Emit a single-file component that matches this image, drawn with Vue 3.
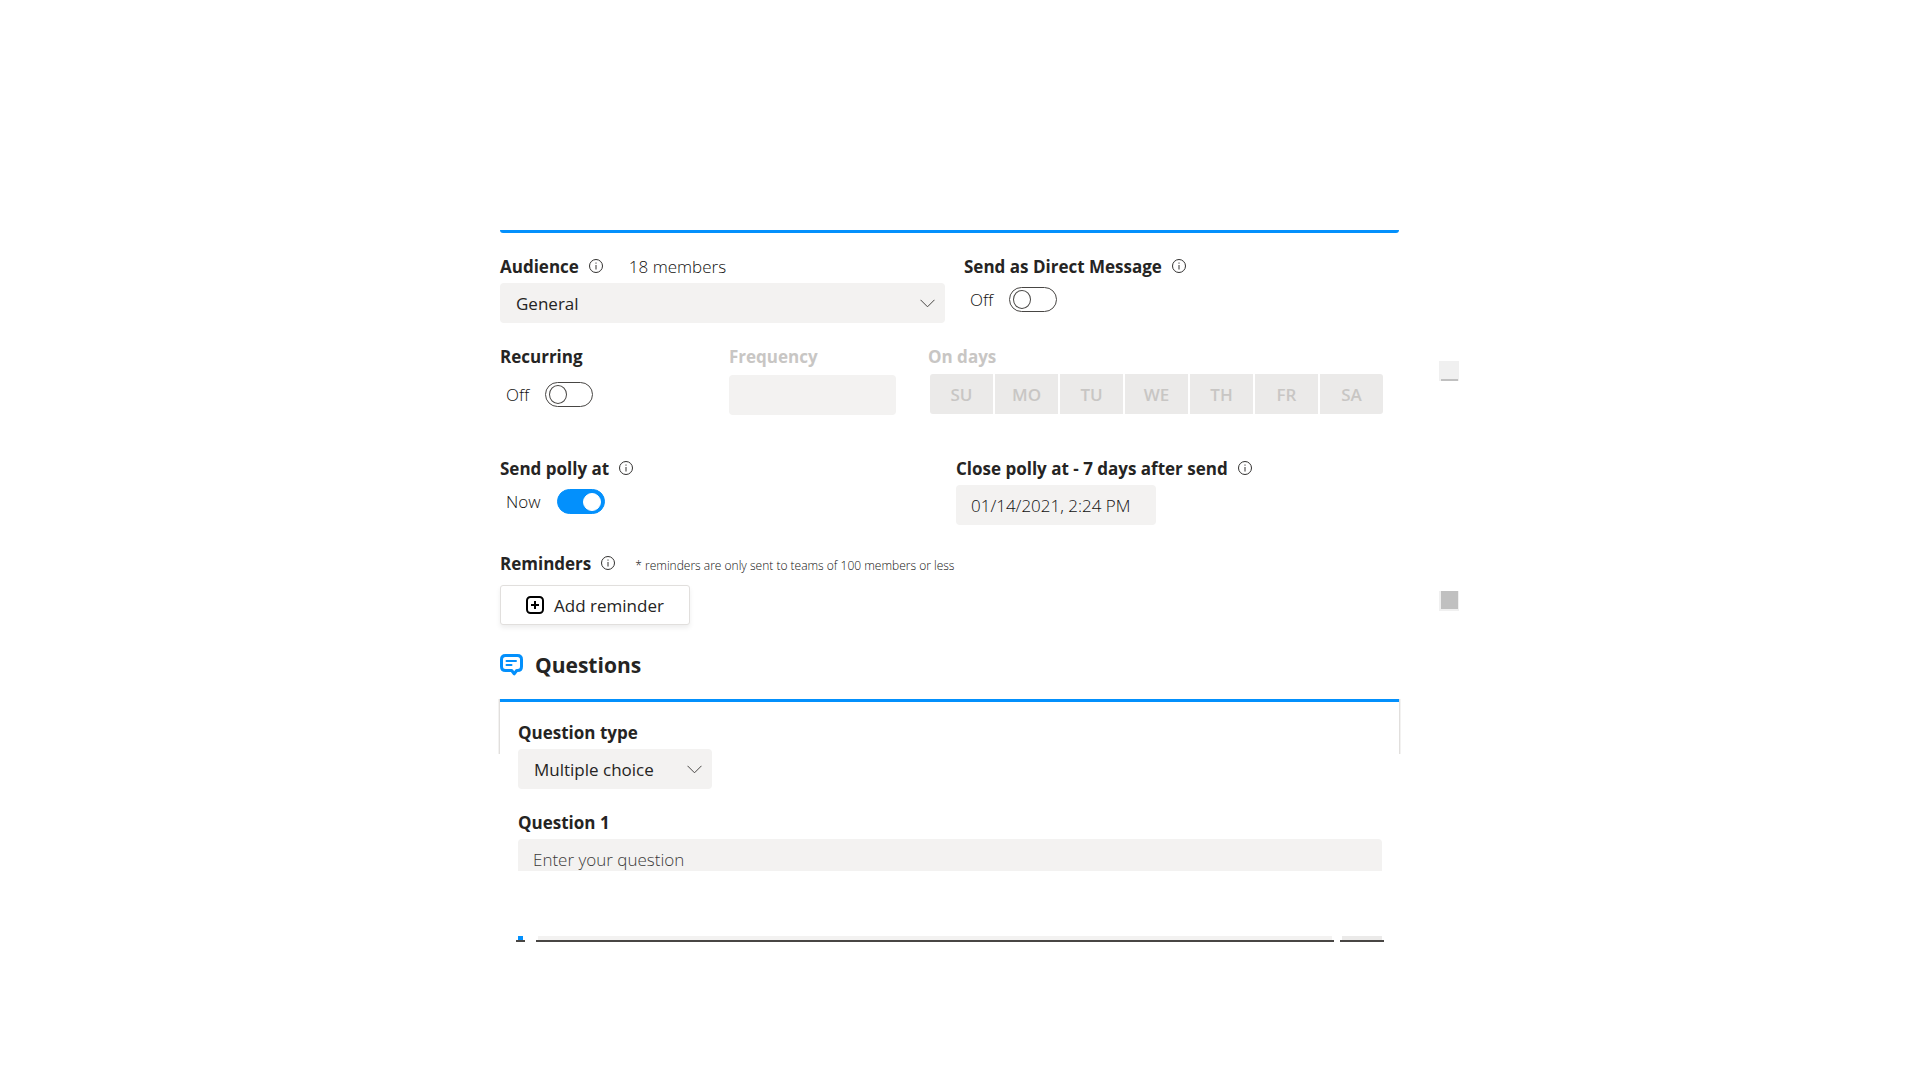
<script setup>
import { ref } from 'vue'

const days = ['SU', 'MO', 'TU', 'WE', 'TH', 'FR', 'SA']
const audience = ref('General')
const questionType = ref('Multiple choice')
const direct = ref(false)
const recurring = ref(false)
const sendNow = ref(true)
const closeAt = ref('01/14/2021, 2:24 PM')
const question = ref('')
</script>

<template>
  <main class="page">
    <form class="form" @submit.prevent>
      <div class="rule rounded"></div>

      <section class="row audience-row">
        <div class="field audience">
          <div class="head">
            <label for="audience">Audience</label>
            <svg class="info" viewBox="0 0 14 14"><circle cx="7" cy="7" r="6.5" /><path d="M7 6v4.5M7 3.5v1.2" /></svg>
            <span class="members">18 members</span>
          </div>
          <div class="select">
            <select id="audience" v-model="audience"><option>General</option></select>
            <svg class="chevron" viewBox="0 0 15 9"><path d="M.5.8l7 7 7-7" /></svg>
          </div>
        </div>
        <div class="field">
          <div class="head">
            <label for="direct">Send as Direct Message</label>
            <svg class="info" viewBox="0 0 14 14"><circle cx="7" cy="7" r="6.5" /><path d="M7 6v4.5M7 3.5v1.2" /></svg>
          </div>
          <div class="toggle">
            <span>{{ direct ? 'On' : 'Off' }}</span>
            <input id="direct" v-model="direct" type="checkbox" role="switch" />
          </div>
        </div>
      </section>

      <section class="row recurring-row">
        <div class="field recurring">
          <div class="head"><label for="recurring">Recurring</label></div>
          <div class="toggle">
            <span>{{ recurring ? 'On' : 'Off' }}</span>
            <input id="recurring" v-model="recurring" type="checkbox" role="switch" />
          </div>
        </div>
        <div class="field frequency">
          <div class="head muted"><label for="frequency">Frequency</label></div>
          <input id="frequency" class="box" type="text" disabled />
        </div>
        <div class="field on-days">
          <div id="days-label" class="head muted">On days</div>
          <div class="days" role="group" aria-labelledby="days-label">
            <button v-for="day in days" :key="day" type="button" disabled>{{ day }}</button>
          </div>
        </div>
      </section>

      <section class="row schedule-row">
        <div class="field send">
          <div class="head">
            <label for="send-now">Send polly at</label>
            <svg class="info" viewBox="0 0 14 14"><circle cx="7" cy="7" r="6.5" /><path d="M7 6v4.5M7 3.5v1.2" /></svg>
          </div>
          <div class="toggle">
            <span>Now</span>
            <input id="send-now" v-model="sendNow" type="checkbox" role="switch" />
          </div>
        </div>
        <div class="field">
          <div class="head">
            <label for="close-at">Close polly at - 7 days after send</label>
            <svg class="info" viewBox="0 0 14 14"><circle cx="7" cy="7" r="6.5" /><path d="M7 6v4.5M7 3.5v1.2" /></svg>
          </div>
          <input id="close-at" v-model="closeAt" class="box date" type="text" />
        </div>
      </section>

      <section class="reminders">
        <div class="head">
          <span>Reminders</span>
          <svg class="info" viewBox="0 0 14 14"><circle cx="7" cy="7" r="6.5" /><path d="M7 6v4.5M7 3.5v1.2" /></svg>
          <small>* reminders are only sent to teams of 100 members or less</small>
        </div>
        <button class="add" type="button">
          <svg viewBox="0 0 18 18"><rect x="1" y="1" width="16" height="16" rx="3.5" /><path d="M9 5v8M5 9h8" /></svg>
          <span>Add reminder</span>
        </button>
      </section>

      <h2 class="title">
        <svg viewBox="0 0 23 22">
          <path d="M5.500 1.500h12q4 0 4 4v7q0 4-4 4h-.8L14.200 19.800 11.700 16.500H5.500q-4 0-4-4v-7q0-4 4-4z" />
          <path class="lines" d="M6.500 7H16M6.500 11H11.500" />
        </svg>
        Questions
      </h2>

      <section class="panel">
        <div class="rule"></div>
        <div class="panel-body">
          <div class="head"><label for="question-type">Question type</label></div>
          <div class="select type">
            <select id="question-type" v-model="questionType"><option>Multiple choice</option></select>
            <svg class="chevron" viewBox="0 0 15 9"><path d="M.5.8l7 7 7-7" /></svg>
          </div>
          <div class="head question-head"><label for="question">Question 1</label></div>
          <div class="clip">
            <input id="question" v-model="question" class="box" type="text" placeholder="Enter your question" />
          </div>
          <div class="choices" aria-hidden="true">
            <i class="mark"></i>
            <i class="answer"></i>
            <i class="action"></i>
          </div>
        </div>
      </section>
    </form>

    <aside class="rail" aria-hidden="true">
      <div class="piece upper"></div>
      <div class="piece lower"></div>
    </aside>
  </main>
</template>

<style>
body {
  background: #fff;
}
</style>

<style scoped>
.page {
  box-sizing: border-box;
  display: flex;
  gap: 40px;
  max-width: 998px;
  margin: 0 auto;
  padding: 230px 0 40px 39px;
  color: #252423;
  font-family: "Segoe UI", "Open Sans", "Noto Sans", sans-serif;
  font-size: 17px;
  line-height: 24px;
}
.form {
  flex: 1;
  min-width: 0;
}
.rule {
  height: 3px;
  background: #0390fc;
}
.rounded {
  border-radius: 0 0 3px 3px;
}
.row {
  display: flex;
}
.head {
  display: flex;
  align-items: center;
  height: 24px;
  font-weight: 700;
  white-space: nowrap;
}
.info {
  width: 14px;
  height: 14px;
  margin: 0 0 2px 10px;
  fill: none;
  stroke: #323130;
}
.members {
  margin-left: 26px;
  color: #11100f;
  font-weight: 300;
}
.audience-row {
  gap: 19px;
  margin-top: 22px;
}
.audience {
  flex: 0 1 445px;
}
.select {
  display: grid;
  align-items: center;
  margin-top: 4px;
}
.select select,
.select .chevron {
  grid-area: 1 / 1;
}
.select select {
  width: 100%;
  height: 40px;
  padding: 2px 40px 0 16px;
  appearance: none;
  border: 0;
  border-radius: 4px;
  background: #f3f2f1;
  color: #252423;
  font: inherit;
}
.chevron {
  justify-self: end;
  width: 15px;
  height: 9px;
  margin-right: 10px;
  fill: none;
  stroke: #484644;
  pointer-events: none;
}
.toggle {
  display: flex;
  align-items: center;
  gap: 16px;
  height: 25px;
  margin: 8px 0 0 6px;
  color: #11100f;
  font-weight: 300;
}
.toggle input {
  box-sizing: border-box;
  width: 48px;
  height: 25px;
  margin: 0;
  padding: 2px 3px;
  appearance: none;
  border: 1px solid #484644;
  border-radius: 13px;
}
.toggle input::before {
  content: "";
  display: block;
  box-sizing: border-box;
  width: 18px;
  height: 19px;
  border: 1px solid #484644;
  border-radius: 50%;
}
.toggle input:checked {
  border-color: #0390fc;
  background: #0390fc;
}
.toggle input:checked::before {
  height: 18px;
  margin: 1px 0 0 auto;
  border-color: #fff;
  background: #fff;
}
.recurring-row {
  margin-top: 22px;
}
.recurring {
  flex: 0 1 229px;
}
.recurring .toggle {
  margin-top: 13px;
}
.muted {
  color: #c8c6c4;
}
.box {
  box-sizing: border-box;
  display: block;
  width: 100%;
  height: 40px;
  padding: 0 15px;
  border: 0;
  border-radius: 4px;
  background: #f3f2f1;
  color: #11100f;
  font: inherit;
  font-weight: 300;
}
.frequency {
  flex: 0 1 167px;
}
.frequency .box {
  margin-top: 6px;
}
.on-days {
  flex: 0 1 455px;
  margin-left: 32px;
}
.days {
  display: flex;
  gap: 2px;
  margin: 5px 0 0 2px;
  overflow: hidden;
  border-radius: 3px;
}
.days button {
  flex: 1;
  height: 40px;
  padding: 2px 0 0;
  border: 0;
  background: #ebeae9;
  color: #c8c6c4;
  font: inherit;
  font-weight: 600;
}
.schedule-row {
  margin-top: 42px;
}
.send {
  flex: 0 1 456px;
}
.date {
  width: 200px;
  margin-top: 4px;
}
.reminders {
  margin-top: 27px;
}
.reminders small {
  margin: 4px 0 0 20px;
  color: #11100f;
  font-size: 12px;
  font-weight: 300;
}
.add {
  display: flex;
  align-items: center;
  justify-content: center;
  gap: 10px;
  width: 190px;
  height: 40px;
  margin-top: 9px;
  padding: 0;
  border: 1px solid #e1dfdd;
  border-radius: 3px;
  background: #fff;
  box-shadow: 0 3px 5px rgba(0, 0, 0, 0.07);
  color: #252423;
  font: inherit;
}
.add span {
  padding-top: 2px;
}
.add svg {
  width: 18px;
  height: 18px;
  fill: none;
  stroke: #000;
  stroke-width: 2;
}
.title {
  display: flex;
  align-items: center;
  gap: 12px;
  margin: 24px 0 18px;
  font-size: 21px;
  font-weight: 700;
  line-height: 32px;
}
.title svg {
  width: 23px;
  height: 22px;
  fill: none;
  stroke: #0390fc;
  stroke-width: 3;
  stroke-linejoin: round;
}
.title .lines {
  stroke-width: 2;
  stroke-linecap: round;
}
.panel {
  margin: 0 -2px;
  padding: 0 2px;
  background:
    linear-gradient(90deg, #f3f2f1 50%, #e1dfdd 50%) 0 0 / 2px 55px no-repeat,
    linear-gradient(270deg, #f3f2f1 50%, #e1dfdd 50%) 100% 0 / 2px 55px no-repeat;
}
.panel-body {
  padding: 19px 17px 0 18px;
}
.type {
  max-width: 194px;
}
.question-head {
  margin-top: 22px;
}
.clip {
  height: 32px;
  margin-top: 4px;
  overflow: hidden;
}
.box::placeholder {
  color: #3b3a39;
  opacity: 1;
}
.choices {
  display: flex;
  margin: 65px -2px 0;
}
.choices i {
  box-sizing: border-box;
  height: 6px;
  border-bottom: 2px solid #484644;
}
.mark {
  width: 9px;
  margin-right: 11px;
  background: linear-gradient(#0390fc, #0390fc) 2px 0 / 5px 4px no-repeat;
}
.answer {
  flex: 1;
  margin-right: 6px;
  background: linear-gradient(#f3f2f1, #f3f2f1) 50% 0 / calc(100% - 4px) 4px no-repeat;
}
.action {
  width: 44px;
  background: linear-gradient(#ebeae9, #ebeae9) 50% 0 / 40px 4px no-repeat;
}
.rail {
  flex: 0 0 20px;
  padding-top: 131px;
}
.piece {
  height: 20px;
  background: #f0f0f0;
}
.upper {
  background: linear-gradient(#c0c0c0, #c0c0c0) 2px 18px / 17px 2px no-repeat #f0f0f0;
}
.lower {
  margin-top: 210px;
  background: linear-gradient(#c0c0c0, #c0c0c0) 2px 0 / 17px 18px no-repeat #f0f0f0;
}
</style>
